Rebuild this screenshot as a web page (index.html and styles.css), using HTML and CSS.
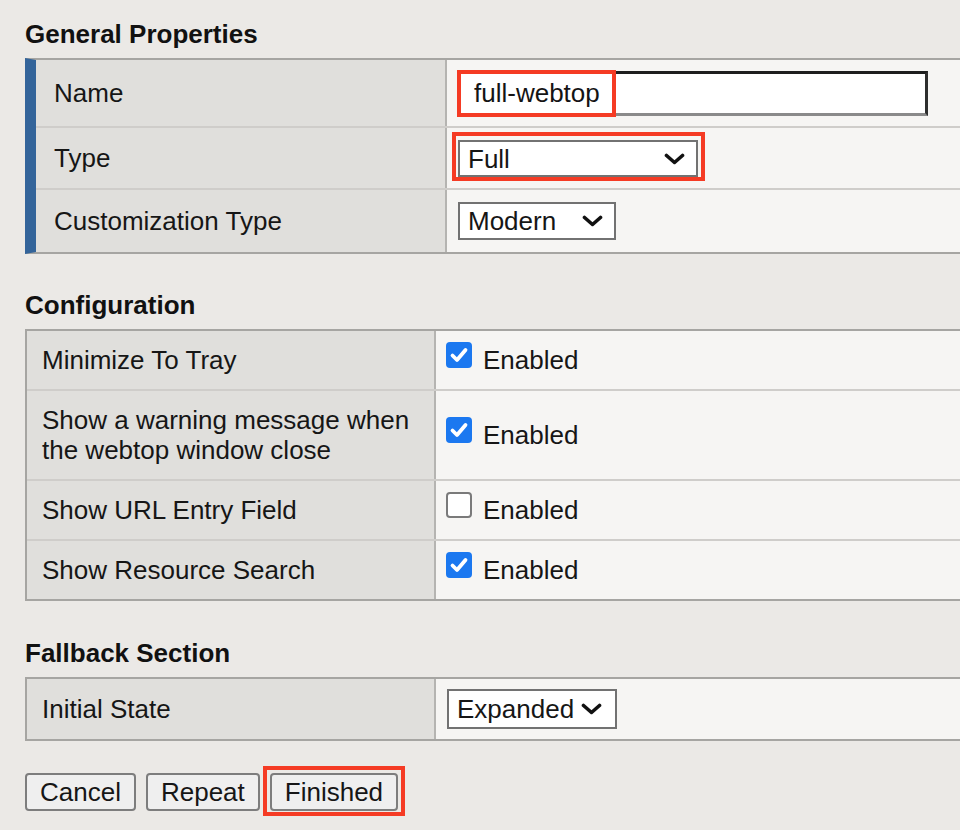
FILE: index.html
```html
<!DOCTYPE html>
<html lang="en">
<head>
<meta charset="utf-8">
<title>Webtop Properties</title>
<link rel="stylesheet" href="styles.css">
</head>
<body>
<div class="page">
  <h2 class="section-title">General Properties</h2>
  <div class="props props--accent">
    <div class="prop-row row-66">
      <div class="prop-label">Name</div>
      <div class="prop-value">
        <div class="text-input">full-webtop<span class="highlight-box"></span></div>
      </div>
    </div>
    <div class="prop-row row-60">
      <div class="prop-label">Type</div>
      <div class="prop-value">
        <div class="mark mark--type">
          <div class="select select--type">
            <span>Full</span>
            <svg class="chevron" viewBox="0 0 21 12" width="21" height="12"><path d="M2.5 2.5 L10.5 9.5 L18.5 2.5"/></svg>
          </div>
        </div>
      </div>
    </div>
    <div class="prop-row row-62">
      <div class="prop-label">Customization Type</div>
      <div class="prop-value">
        <div class="select select--custom">
          <span>Modern</span>
          <svg class="chevron" viewBox="0 0 21 12" width="21" height="12"><path d="M2.5 2.5 L10.5 9.5 L18.5 2.5"/></svg>
        </div>
      </div>
    </div>
  </div>

  <h2 class="section-title section-title--spaced">Configuration</h2>
  <div class="props props--plain">
    <div class="prop-row row-58">
      <div class="prop-label">Minimize To Tray</div>
      <div class="prop-value">
        <span class="checkbox checkbox--on"><svg viewBox="0 0 26 26" width="26" height="26"><path d="M6.5 13.5 L11 18 L19.5 8"/></svg></span>
        <span class="check-text">Enabled</span>
      </div>
    </div>
    <div class="prop-row row-88">
      <div class="prop-label">Show a warning message when<br>the webtop window close</div>
      <div class="prop-value">
        <span class="checkbox checkbox--on"><svg viewBox="0 0 26 26" width="26" height="26"><path d="M6.5 13.5 L11 18 L19.5 8"/></svg></span>
        <span class="check-text">Enabled</span>
      </div>
    </div>
    <div class="prop-row row-58">
      <div class="prop-label">Show URL Entry Field</div>
      <div class="prop-value">
        <span class="checkbox"></span>
        <span class="check-text">Enabled</span>
      </div>
    </div>
    <div class="prop-row row-58">
      <div class="prop-label">Show Resource Search</div>
      <div class="prop-value">
        <span class="checkbox checkbox--on"><svg viewBox="0 0 26 26" width="26" height="26"><path d="M6.5 13.5 L11 18 L19.5 8"/></svg></span>
        <span class="check-text">Enabled</span>
      </div>
    </div>
  </div>

  <h2 class="section-title section-title--spaced2">Fallback Section</h2>
  <div class="props props--plain">
    <div class="prop-row row-60">
      <div class="prop-label">Initial State</div>
      <div class="prop-value">
        <div class="select select--state">
          <span>Expanded</span>
          <svg class="chevron" viewBox="0 0 21 12" width="21" height="12"><path d="M2.5 2.5 L10.5 9.5 L18.5 2.5"/></svg>
        </div>
      </div>
    </div>
  </div>

  <div class="actions">
    <button class="btn" type="button">Cancel</button>
    <button class="btn" type="button">Repeat</button>
    <span class="mark mark--btn"><button class="btn" type="button">Finished</button></span>
  </div>
</div>
</body>
</html>
```

FILE: styles.css
```css
* { box-sizing: border-box; }
html, body { margin: 0; padding: 0; }
body {
  background: #ebe9e6;
  font-family: "Liberation Sans", Arial, sans-serif;
  font-size: 26px;
  color: #161616;
  overflow: hidden;
  min-height: 830px;
}
.page { padding: 19px 0 20px 25px; }

.section-title {
  margin: 0 0 9px;
  font-size: 26px;
  line-height: 30px;
  font-weight: bold;
  color: #111;
}
.section-title--spaced { margin-top: 36px; }
.section-title--spaced2 { margin-top: 37px; }

.props {
  width: 960px;
  border: 2px solid #a6a5a2;
  border-right: 0;
  background: #f6f5f3;
}
.props--accent { border-left: 11px solid #33649a; }

.prop-row { display: flex; }
.prop-row + .prop-row { border-top: 2px solid #cfcdca; }
.row-58 { height: 60px; }
.row-60 { height: 62px; }
.row-62 { height: 64px; }
.row-66 { height: 66px; }
.row-88 { height: 90px; }
.props .prop-row:first-child.row-58 { height: 58px; }
.props .prop-row:first-child.row-60 { height: 60px; }

.prop-label {
  flex: 0 0 auto;
  width: 411px;
  background: #e0dfdc;
  border-right: 2px solid #b5b4b1;
  padding-left: 18px;
  display: flex;
  align-items: center;
  line-height: 30px;
}
.props--plain .prop-label { width: 409px; padding-left: 15px; }

.prop-value {
  flex: 1 1 auto;
  display: flex;
  align-items: center;
  padding-left: 11px;
  background: #f6f5f3;
}
.props--plain .prop-value { padding-left: 10px; }

.text-input {
  position: relative;
  width: 470px;
  height: 45px;
  background: #fff;
  border: 3px solid;
  border-color: #1e1e1e #2e2e2e #8a8a8a #666;
  padding-left: 13px;
  line-height: 39px;
  color: #141414;
}
.highlight-box {
  position: absolute;
  left: -4px;
  top: -4px;
  width: 159px;
  height: 47px;
  border: 4px solid #f53b24;
}

.mark {
  display: inline-flex;
  border: 4px solid #f53b24;
}
.mark--type {
  margin: -3px 0 0 -6px;
  padding: 4px 3px 0 2px;
}
.mark--btn {
  margin: -7px 0 -5px -7px;
  padding: 3px 3px 1px 3px;
}

.select {
  display: flex;
  align-items: center;
  justify-content: space-between;
  background: #fff;
  border: 2px solid #727272;
  padding: 0 11px 0 8px;
  line-height: 30px;
}
.select--type { width: 240px; height: 37px; }
.select--custom { width: 158px; height: 38px; }
.select--state { width: 170px; height: 40px; padding-right: 13px; margin-left: 1px; }
.chevron { display: block; }
.chevron path { fill: none; stroke: #111; stroke-width: 3.6; stroke-linecap: round; stroke-linejoin: round; }

.checkbox {
  flex: 0 0 auto;
  width: 26px;
  height: 26px;
  border-radius: 4px;
  border: 2px solid #7a7a7a;
  background: #fff;
  margin-bottom: 10px;
}
.checkbox--on { background: #1b78f0; border: 0; }
.checkbox svg { display: block; }
.checkbox svg path { fill: none; stroke: #fff; stroke-width: 3.8; stroke-linecap: round; stroke-linejoin: round; }
.check-text { margin-left: 11px; line-height: 30px; }

.actions {
  display: flex;
  align-items: flex-start;
  gap: 10px;
  margin-top: 32px;
}
.btn {
  height: 38px;
  padding: 0 13px;
  font-family: "Liberation Sans", Arial, sans-serif;
  font-size: 26px;
  color: #161616;
  background: #efefef;
  border: 2px solid #7d7d7d;
  border-radius: 4px;
  line-height: 30px;
}
```
